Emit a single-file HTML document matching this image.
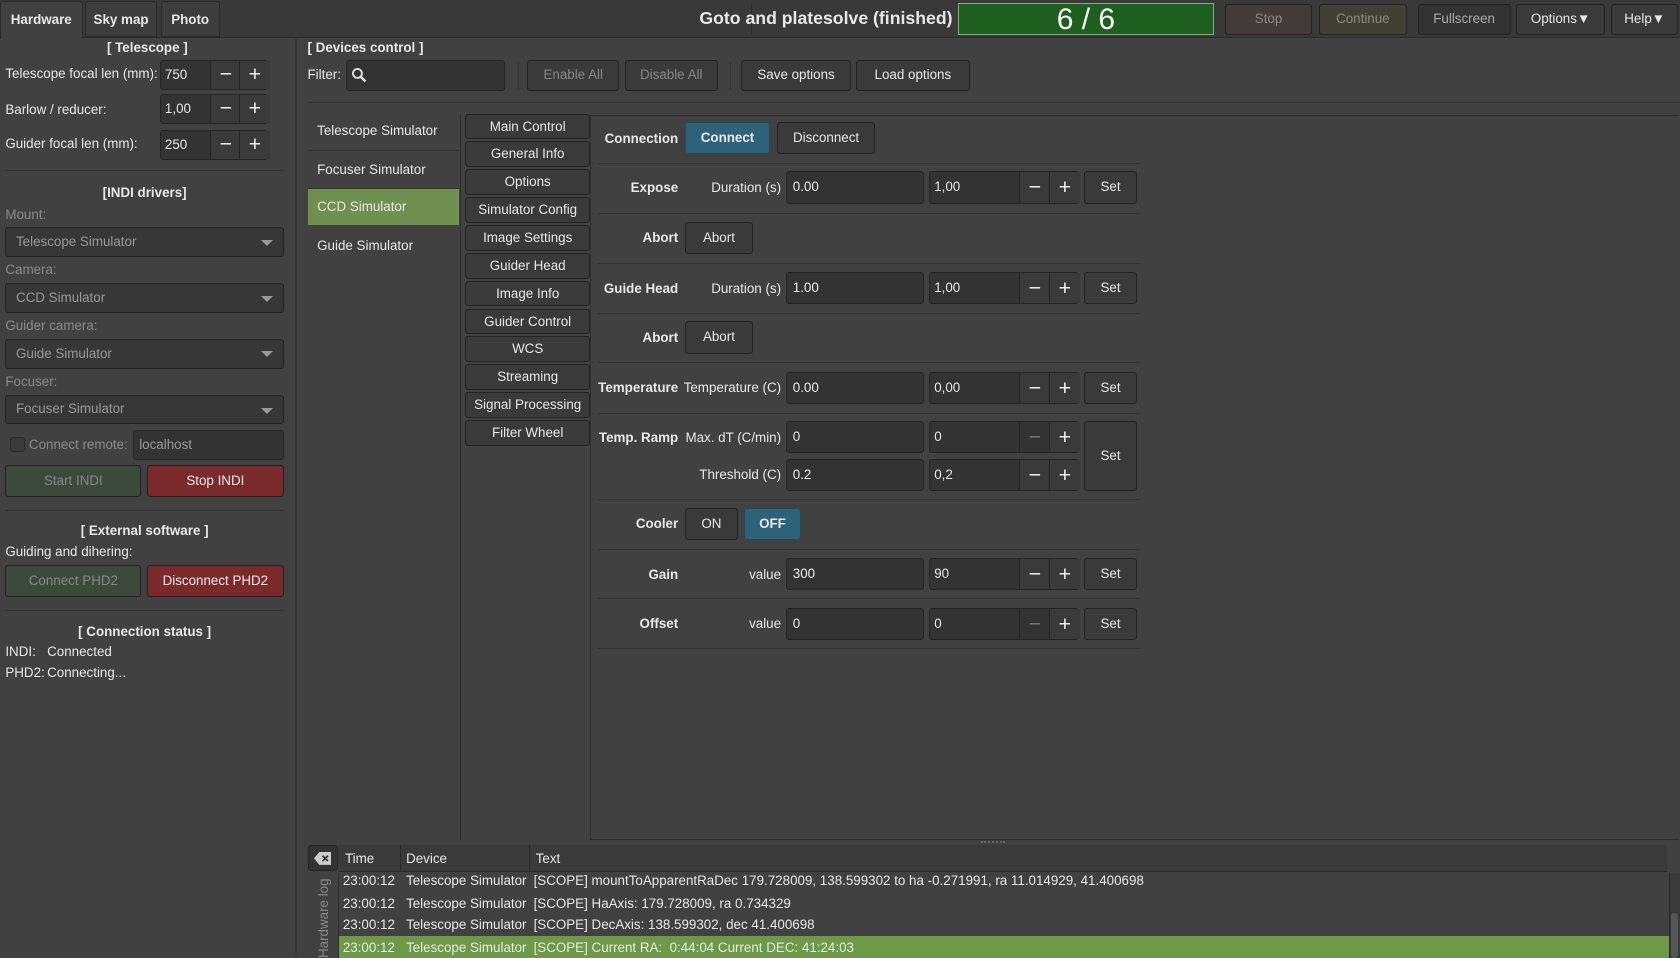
<!DOCTYPE html>
<html><head><meta charset="utf-8"><style>
html,body{margin:0;padding:0;background:#414141;overflow:hidden}
body{width:1568px;height:894px;zoom:1.07143;position:relative;font-family:"Liberation Sans",sans-serif;font-size:12.5px;color:#e8e8e8}
.a{position:absolute;box-sizing:border-box;white-space:nowrap}
.t{position:absolute;white-space:nowrap;line-height:16px}
.b{font-weight:bold}
.btn{position:absolute;box-sizing:border-box;background:#3a3a3a;border:1px solid #222;border-radius:3px;text-align:center;color:#e8e8e8;white-space:nowrap}
.in{position:absolute;box-sizing:border-box;background:#333;border:1px solid #252525;border-radius:3px;padding-left:5px;white-space:nowrap;color:#eee}
.hl{position:absolute;height:1px;background:#333}
.sp{position:absolute;box-sizing:border-box;background:#333;border:1px solid #252525;border-radius:3px}
.sp span{position:absolute;top:0;bottom:0;width:28px;border-left:1px solid #252525;background:#3a3a3a;text-align:center;font-size:20px;color:#eee}
.gray{color:#8a8a8a}
.dis{color:#888}
.combo{position:absolute;box-sizing:border-box;background:#373737;border:1px solid #222;border-radius:3px;color:#999;padding-left:9px}
.combo:after{content:"";position:absolute;right:9px;top:11px;border-left:6px solid transparent;border-right:6px solid transparent;border-top:6px solid #999}
</style></head><body>
<!-- top bar -->
<div class="a" style="left:0;top:0;width:1568px;height:35px;background:#393939;border-bottom:1px solid #2a2a2a"></div>
<div class="a b" style="left:0;top:1px;width:77px;height:35px;background:#414141;border:1px solid #2a2a2a;border-bottom:none;border-radius:3px 3px 0 0;line-height:33px;text-align:center">Hardware</div>
<div class="a b" style="left:79px;top:1px;width:68px;height:34px;background:#3d3d3d;border:1px solid #2a2a2a;border-radius:3px 3px 0 0;line-height:33px;text-align:center">Sky map</div>
<div class="a b" style="left:150px;top:1px;width:55px;height:34px;background:#3d3d3d;border:1px solid #2a2a2a;border-radius:3px 3px 0 0;line-height:33px;text-align:center">Photo</div>
<div class="a" style="left:701px;top:4px;width:1px;height:28px;background:#2e2e2e"></div>
<div class="a b" style="left:600px;top:7px;width:289px;text-align:right;font-size:16.5px;line-height:20px">Goto and platesolve (finished)</div>
<div class="a" style="left:894px;top:3px;width:239px;height:30px;background:#1e5e1e;border:1px solid #7fae7f;text-align:center;font-size:28px;line-height:29px;color:#fff">6 / 6</div>
<div class="btn dis" style="left:1143px;top:4px;width:82px;height:29px;line-height:27px;background:#433a3a">Stop</div>
<div class="btn dis" style="left:1231px;top:4px;width:82px;height:29px;line-height:27px;background:#414133">Continue</div>
<div class="btn" style="left:1323px;top:4px;width:87px;height:29px;line-height:27px;background:#333;color:#aaa">Fullscreen</div>
<div class="btn" style="left:1415px;top:4px;width:83px;height:29px;line-height:27px">Options&#9660;</div>
<div class="btn" style="left:1504px;top:4px;width:62px;height:29px;line-height:27px">Help&#9660;</div>

<!-- left panel -->
<div class="a" style="left:275px;top:36px;width:2px;height:858px;background:#363636"></div>
<div class="t b" style="left:0;width:275px;text-align:center;top:36px">[ Telescope ]</div>
<div class="t" style="left:5px;top:61px">Telescope focal len (mm):</div>
<div class="t" style="left:5px;top:94px">Barlow / reducer:</div>
<div class="t" style="left:5px;top:126px">Guider focal len (mm):</div>
<div class="sp" style="left:149px;top:56px;width:101px;height:28px;line-height:26px;padding-left:4px">750<span style="left:46px">&minus;</span><span style="left:73px">+</span></div>
<div class="sp" style="left:149px;top:88px;width:101px;height:28px;line-height:26px;padding-left:4px">1,00<span style="left:46px">&minus;</span><span style="left:73px">+</span></div>
<div class="sp" style="left:149px;top:121px;width:101px;height:28px;line-height:26px;padding-left:4px">250<span style="left:46px">&minus;</span><span style="left:73px">+</span></div>
<div class="hl" style="left:5px;top:159px;width:260px"></div>
<div class="t b" style="left:0;width:270px;text-align:center;top:172px">[INDI drivers]</div>
<div class="t gray" style="left:5px;top:192px">Mount:</div>
<div class="combo" style="left:5px;top:212px;width:260px;height:28px;line-height:26px">Telescope Simulator</div>
<div class="t gray" style="left:5px;top:244px">Camera:</div>
<div class="combo" style="left:5px;top:264px;width:260px;height:28px;line-height:26px">CCD Simulator</div>
<div class="t gray" style="left:5px;top:296px">Guider camera:</div>
<div class="combo" style="left:5px;top:316px;width:260px;height:28px;line-height:26px">Guide Simulator</div>
<div class="t gray" style="left:5px;top:348px">Focuser:</div>
<div class="combo" style="left:5px;top:369px;width:260px;height:27px;line-height:25px">Focuser Simulator</div>
<div class="a" style="left:9px;top:408px;width:14px;height:14px;border:1px solid #2a2a2a;border-radius:3px;background:#3a3a3a"></div>
<div class="t gray" style="left:27px;top:407px">Connect remote:</div>
<div class="in" style="left:124px;top:401px;width:141px;height:28px;line-height:26px;color:#999">localhost</div>
<div class="btn dis" style="left:5px;top:434px;width:127px;height:30px;line-height:28px;background:#3b4a3b">Start INDI</div>
<div class="btn" style="left:137px;top:434px;width:128px;height:30px;line-height:28px;background:#7a2a2a">Stop INDI</div>
<div class="hl" style="left:5px;top:476px;width:260px"></div>
<div class="t b" style="left:0;width:270px;text-align:center;top:487px">[ External software ]</div>
<div class="t" style="left:5px;top:507px">Guiding and dihering:</div>
<div class="btn dis" style="left:5px;top:527px;width:127px;height:30px;line-height:28px;background:#3b4a3b">Connect PHD2</div>
<div class="btn" style="left:137px;top:527px;width:128px;height:30px;line-height:28px;background:#7a2a2a">Disconnect PHD2</div>
<div class="hl" style="left:5px;top:569px;width:260px"></div>
<div class="t b" style="left:0;width:270px;text-align:center;top:581px">[ Connection status ]</div>
<div class="t" style="left:5px;top:600px">INDI:</div><div class="t" style="left:44px;top:600px">Connected</div>
<div class="t" style="left:5px;top:620px">PHD2:</div><div class="t" style="left:44px;top:620px">Connecting...</div>

<!-- devices control -->
<div class="t b" style="left:287px;top:36px">[ Devices control ]</div>
<div class="t" style="left:287px;top:62px">Filter:</div>
<div class="in" style="left:323px;top:56px;width:148px;height:29px">
<svg width="16" height="16" style="position:absolute;left:4px;top:6px" viewBox="0 0 16 16"><circle cx="6" cy="6" r="4.2" fill="none" stroke="#ddd" stroke-width="1.8"/><path d="M9 9l4.5 4.5" stroke="#ddd" stroke-width="2.4"/></svg></div>
<div class="a" style="left:483px;top:58px;width:1px;height:26px;background:#333"></div>
<div class="btn dis" style="left:492px;top:56px;width:86px;height:29px;line-height:27px">Enable All</div>
<div class="btn dis" style="left:583px;top:56px;width:87px;height:29px;line-height:27px">Disable All</div>
<div class="a" style="left:681px;top:58px;width:1px;height:26px;background:#333"></div>
<div class="btn" style="left:692px;top:56px;width:102px;height:29px;line-height:27px">Save options</div>
<div class="btn" style="left:799px;top:56px;width:106px;height:29px;line-height:27px">Load options</div>
<div class="hl" style="left:287px;top:95px;width:1281px"></div>

<!-- device list -->
<div class="t" style="left:296px;top:114px">Telescope Simulator</div>
<div class="hl" style="left:287px;top:140px;width:141px"></div>
<div class="t" style="left:296px;top:150px">Focuser Simulator</div>
<div class="hl" style="left:287px;top:175px;width:141px"></div>
<div class="a" style="left:287px;top:176px;width:141px;height:34px;background:#709050"></div>
<div class="t" style="left:296px;top:185px">CCD Simulator</div>
<div class="t" style="left:296px;top:221px">Guide Simulator</div>
<div class="a" style="left:429px;top:106px;width:1px;height:678px;background:#2e2e2e"></div>

<!-- content box -->
<div class="a" style="left:551px;top:107px;width:1016px;height:677px;border:1px solid #2e2e2e;border-right:none"></div>
<div class="btn" style="left:434px;top:106px;width:117px;height:24px;line-height:22px">Main Control</div>
<div class="btn" style="left:434px;top:132px;width:117px;height:24px;line-height:22px">General Info</div>
<div class="btn" style="left:434px;top:158px;width:117px;height:24px;line-height:22px">Options</div>
<div class="btn" style="left:434px;top:184px;width:117px;height:24px;line-height:22px">Simulator Config</div>
<div class="btn" style="left:434px;top:210px;width:117px;height:24px;line-height:22px">Image Settings</div>
<div class="btn" style="left:434px;top:236px;width:117px;height:24px;line-height:22px">Guider Head</div>
<div class="btn" style="left:434px;top:262px;width:117px;height:24px;line-height:22px">Image Info</div>
<div class="btn" style="left:434px;top:288px;width:117px;height:24px;line-height:22px">Guider Control</div>
<div class="btn" style="left:434px;top:314px;width:117px;height:24px;line-height:22px">WCS</div>
<div class="btn" style="left:434px;top:340px;width:117px;height:24px;line-height:22px">Streaming</div>
<div class="btn" style="left:434px;top:366px;width:117px;height:24px;line-height:22px">Signal Processing</div>
<div class="btn" style="left:434px;top:392px;width:117px;height:24px;line-height:22px">Filter Wheel</div>

<!-- rows -->
<div class="t b" style="left:520px;width:113px;text-align:right;top:121px">Connection</div>
<div class="btn b" style="left:639px;top:114px;width:80px;height:30px;line-height:28px;background:#2e6279;border-color:#24495a">Connect</div>
<div class="btn" style="left:725px;top:114px;width:92px;height:30px;line-height:28px">Disconnect</div>
<div class="hl" style="left:558px;top:152px;width:506px"></div>

<div class="t b" style="left:520px;width:113px;text-align:right;top:167px">Expose</div>
<div class="t" style="left:620px;width:109px;text-align:right;top:167px">Duration (s)</div>
<div class="in" style="left:734px;top:160px;width:128px;height:30px;line-height:28px">0.00</div>
<div class="sp" style="left:867px;top:160px;width:140px;height:30px;line-height:28px;padding-left:4px">1,00<span style="left:83px">&minus;</span><span style="left:111px">+</span></div>
<div class="btn" style="left:1012px;top:160px;width:49px;height:30px;line-height:28px">Set</div>
<div class="hl" style="left:558px;top:199px;width:506px"></div>

<div class="t b" style="left:520px;width:113px;text-align:right;top:214px">Abort</div>
<div class="btn" style="left:639px;top:207px;width:64px;height:30px;line-height:28px">Abort</div>
<div class="hl" style="left:558px;top:245px;width:506px"></div>

<div class="t b" style="left:520px;width:113px;text-align:right;top:261px">Guide Head</div>
<div class="t" style="left:620px;width:109px;text-align:right;top:261px">Duration (s)</div>
<div class="in" style="left:734px;top:254px;width:128px;height:30px;line-height:28px">1.00</div>
<div class="sp" style="left:867px;top:254px;width:140px;height:30px;line-height:28px;padding-left:4px">1,00<span style="left:83px">&minus;</span><span style="left:111px">+</span></div>
<div class="btn" style="left:1012px;top:254px;width:49px;height:30px;line-height:28px">Set</div>
<div class="hl" style="left:558px;top:292px;width:506px"></div>

<div class="t b" style="left:520px;width:113px;text-align:right;top:307px">Abort</div>
<div class="btn" style="left:639px;top:300px;width:64px;height:30px;line-height:28px">Abort</div>
<div class="hl" style="left:558px;top:338px;width:506px"></div>

<div class="t b" style="left:520px;width:113px;text-align:right;top:354px">Temperature</div>
<div class="t" style="left:620px;width:109px;text-align:right;top:354px">Temperature (C)</div>
<div class="in" style="left:734px;top:347px;width:128px;height:30px;line-height:28px">0.00</div>
<div class="sp" style="left:867px;top:347px;width:140px;height:30px;line-height:28px;padding-left:4px">0,00<span style="left:83px">&minus;</span><span style="left:111px">+</span></div>
<div class="btn" style="left:1012px;top:347px;width:49px;height:30px;line-height:28px">Set</div>
<div class="hl" style="left:558px;top:385px;width:506px"></div>

<div class="t b" style="left:520px;width:113px;text-align:right;top:400px">Temp. Ramp</div>
<div class="t" style="left:620px;width:109px;text-align:right;top:400px">Max. dT (C/min)</div>
<div class="in" style="left:734px;top:393px;width:128px;height:30px;line-height:28px">0</div>
<div class="sp" style="left:867px;top:393px;width:140px;height:30px;line-height:28px;padding-left:4px">0<span style="left:83px;background:#333;color:#777">&minus;</span><span style="left:111px">+</span></div>
<div class="t" style="left:620px;width:109px;text-align:right;top:435px">Threshold (C)</div>
<div class="in" style="left:734px;top:428px;width:128px;height:30px;line-height:28px">0.2</div>
<div class="sp" style="left:867px;top:428px;width:140px;height:30px;line-height:28px;padding-left:4px">0,2<span style="left:83px">&minus;</span><span style="left:111px">+</span></div>
<div class="btn" style="left:1012px;top:393px;width:49px;height:65px;line-height:63px">Set</div>
<div class="hl" style="left:558px;top:466px;width:506px"></div>

<div class="t b" style="left:520px;width:113px;text-align:right;top:481px">Cooler</div>
<div class="btn" style="left:639px;top:474px;width:50px;height:30px;line-height:28px">ON</div>
<div class="btn b" style="left:694px;top:474px;width:54px;height:30px;line-height:28px;background:#2e6279;border-color:#24495a">OFF</div>
<div class="hl" style="left:558px;top:512px;width:506px"></div>

<div class="t b" style="left:520px;width:113px;text-align:right;top:528px">Gain</div>
<div class="t" style="left:620px;width:109px;text-align:right;top:528px">value</div>
<div class="in" style="left:734px;top:521px;width:128px;height:30px;line-height:28px">300</div>
<div class="sp" style="left:867px;top:521px;width:140px;height:30px;line-height:28px;padding-left:4px">90<span style="left:83px">&minus;</span><span style="left:111px">+</span></div>
<div class="btn" style="left:1012px;top:521px;width:49px;height:30px;line-height:28px">Set</div>
<div class="hl" style="left:558px;top:558px;width:506px"></div>

<div class="t b" style="left:520px;width:113px;text-align:right;top:574px">Offset</div>
<div class="t" style="left:620px;width:109px;text-align:right;top:574px">value</div>
<div class="in" style="left:734px;top:567px;width:128px;height:30px;line-height:28px">0</div>
<div class="sp" style="left:867px;top:567px;width:140px;height:30px;line-height:28px;padding-left:4px">0<span style="left:83px;background:#333;color:#777">&minus;</span><span style="left:111px">+</span></div>
<div class="btn" style="left:1012px;top:567px;width:49px;height:30px;line-height:28px">Set</div>
<div class="hl" style="left:558px;top:605px;width:506px"></div>

<!-- splitter -->
<div class="a" style="left:916px;top:785px;width:22px;height:2px;border-top:2px dotted #666"></div>

<!-- log -->
<div class="btn" style="left:287px;top:789px;width:28px;height:24px;background:#333">
<svg width="16" height="12" viewBox="0 0 16 12" style="position:absolute;left:5px;top:5px"><path d="M5 0h11v12H5L0 6z" fill="#ccc"/><path d="M8 3.5l5 5M13 3.5l-5 5" stroke="#333" stroke-width="1.5"/></svg></div>
<div class="a" style="left:316px;top:789px;width:1240px;height:25px;background:#3a3a3a;border-bottom:1px solid #2a2a2a"></div>
<div class="t" style="left:322px;top:793px">Time</div>
<div class="a" style="left:373px;top:789px;width:1px;height:25px;background:#2a2a2a"></div>
<div class="t" style="left:379px;top:793px">Device</div>
<div class="a" style="left:494px;top:789px;width:1px;height:25px;background:#2a2a2a"></div>
<div class="t" style="left:500px;top:793px">Text</div>
<div class="a" style="left:286px;top:815px;width:30px;height:79px;border-right:1px solid #2e2e2e"></div>
<div class="t gray" style="left:302px;top:894px;transform:rotate(-90deg);transform-origin:0 0;line-height:14px;margin-left:-7px">Hardware log</div>
<div class="t" style="left:320px;top:814px">23:00:12</div><div class="t" style="left:379px;top:814px">Telescope Simulator</div><div class="t" style="left:498px;top:814px">[SCOPE] mountToApparentRaDec 179.728009, 138.599302 to ha -0.271991, ra 11.014929, 41.400698</div>
<div class="t" style="left:320px;top:835px">23:00:12</div><div class="t" style="left:379px;top:835px">Telescope Simulator</div><div class="t" style="left:498px;top:835px">[SCOPE] HaAxis: 179.728009, ra 0.734329</div>
<div class="t" style="left:320px;top:855px">23:00:12</div><div class="t" style="left:379px;top:855px">Telescope Simulator</div><div class="t" style="left:498px;top:855px">[SCOPE] DecAxis: 138.599302, dec 41.400698</div>
<div class="a" style="left:316px;top:874px;width:1242px;height:20px;background:#6e9a48"></div>
<div class="t" style="left:320px;top:876px">23:00:12</div><div class="t" style="left:379px;top:876px">Telescope Simulator</div><div class="t" style="left:498px;top:876px">[SCOPE] Current RA:&nbsp; 0:44:04 Current DEC: 41:24:03</div>
<div class="a" style="left:1558px;top:815px;width:10px;height:79px;background:#3a3a3a;border-left:1px solid #2a2a2a"></div>
<div class="a" style="left:1560px;top:852px;width:6px;height:42px;background:#555;border-radius:3px"></div>
</body></html>
